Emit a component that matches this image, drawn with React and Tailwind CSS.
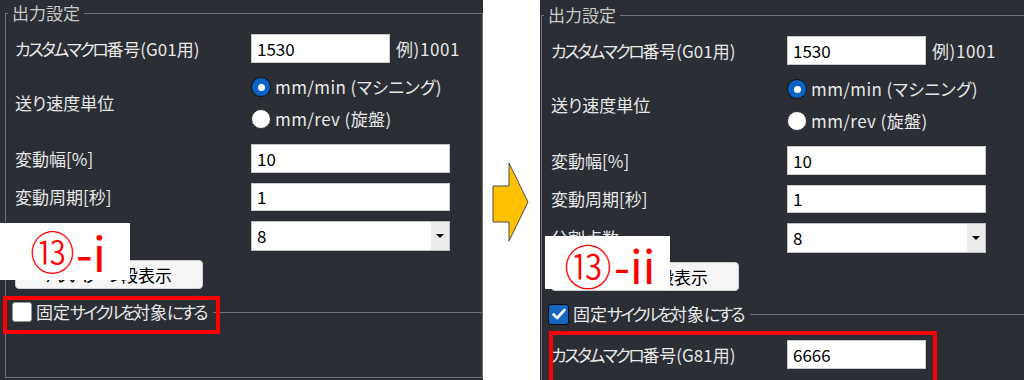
import React from "react";

const font = "font-['Noto_Sans_CJK_JP','Noto_Sans',sans-serif] [font-feature-settings:'palt']";

// kana in the original UI font are narrow, so tighten the kana runs
function J({ t, cls = "tracking-[-2.5px]" }) {
  return t.split(/([\u3041-\u30ff]+)/).map((s, i) =>
    i % 2 ? (
      <span key={i} className={cls}>{s}</span>
    ) : (
      s
    )
  );
}

function TextBox({ value, className = "" }) {
  return (
    <div className={`h-full bg-white border border-[#c9c9c9] flex items-center pl-[5px] text-[17px] text-black ${className}`}>
      {value}
    </div>
  );
}

function Radio({ checked, label }) {
  return (
    <div className="h-[32px] flex items-center gap-[4px]">
      {checked ? (
        <span className="w-[20px] h-[20px] rounded-full bg-[#0b63c4] border border-[#111] flex items-center justify-center">
          <span className="w-[7px] h-[7px] rounded-full bg-white" />
        </span>
      ) : (
        <span className="w-[20px] h-[20px] rounded-full bg-white border border-[#333]" />
      )}
      <span className="text-[17px] text-[#e8e8e8] tracking-[0.4px]">{label}</span>
    </div>
  );
}

function Checkbox({ checked }) {
  if (checked) {
    return (
      <span className="w-[21px] h-[21px] rounded-[3px] bg-[#1565c0] border border-[#0d0d0d] flex items-center justify-center">
        <svg viewBox="0 0 16 16" className="w-[16px] h-[16px]">
          <path d="M2.5 8.5 L6.2 12 L13.5 4" fill="none" stroke="white" strokeWidth="2.6" strokeLinecap="round" strokeLinejoin="round" />
        </svg>
      </span>
    );
  }
  return <span className="w-[20px] h-[20px] rounded-[3px] bg-white border border-[#999]" />;
}

function Panel({ second }) {
  return (
    <div className={`h-[380px] overflow-hidden bg-[#2b2e34] ${second ? "flex-1 pl-[1px] pt-[4px]" : "w-[483px] pl-[5px] pt-[2px]"}`}>
      <fieldset className={`border border-[#6e7177] ${second ? "w-[484px] h-[400px]" : "w-[478px] h-[376px]"}`}>
        <legend className="ml-[2px] px-[4px] h-[22px] leading-[22px] text-[17px] text-[#c9c9c9]">出力設定</legend>
        <div className="pl-[9px] text-[17px] text-[#e8e8e8]">
          <div className="mt-[10px] h-[29px] flex items-center">
            <span className="w-[236px]"><J t="カスタムマクロ番号(G01用)" /></span>
            <TextBox value="1530" className="w-[139px]" />
            <span className="ml-[6px] tracking-[0.6px]">例)1001</span>
          </div>
          <div className="mt-[8px] h-[64px] flex items-center">
            <span className="w-[236px]">送り速度単位</span>
            <div className="flex flex-col">
              <Radio checked label="mm/min (マシニング)" />
              <Radio label="mm/rev (旋盤)" />
            </div>
          </div>
          <div className="mt-[9px] h-[29px] flex items-center">
            <span className="w-[236px]">変動幅[%]</span>
            <TextBox value="10" className="w-[199px]" />
          </div>
          <div className="mt-[10px] h-[28px] flex items-center">
            <span className="w-[236px]">変動周期[秒]</span>
            <TextBox value="1" className="w-[199px]" />
          </div>
          <div className="mt-[10px] h-[30px] flex items-center">
            <span className="w-[236px]">分割点数</span>
            <div className="w-[199px] h-full bg-white border border-[#bdbdbd] flex text-black">
              <span className="flex-1 flex items-center pl-[5px]">8</span>
              <span className="w-[18px] bg-[#ececec] flex items-center justify-center">
                <span className="w-0 h-0 border-l-[4px] border-r-[4px] border-t-[4px] border-l-transparent border-r-transparent border-t-black" />
              </span>
            </div>
          </div>
          <div className="mt-[9px] h-[29px] flex">
            <button className="w-[188px] h-full bg-[#f5f5f5] border border-[#cfcfcf] rounded-[4px] text-[17px] text-black">
              <J t="パスパターン段表示" cls="tracking-[-3px]" />
            </button>
          </div>
          <div className="mt-[12px] h-[22px] -ml-[3px] flex items-center">
            <Checkbox checked={second} />
            <span className="ml-[4px] text-[17px] text-[#e8e8e8]">
              <J t="固定サイクルを対象にする" cls="tracking-[-2.8px]" />
            </span>
            <span className="ml-[7px] flex-1 h-px bg-[#6e7177]" />
          </div>
          {second && (
            <div className="mt-[15px] h-[29px] flex items-center">
              <span className="w-[236px]"><J t="カスタムマクロ番号(G81用)" /></span>
              <TextBox value="6666" className="w-[139px]" />
            </div>
          )}
        </div>
      </fieldset>
    </div>
  );
}

export default function App() {
  return (
    <div className={`relative w-[1024px] h-[380px] bg-white flex overflow-hidden ${font}`}>
      <Panel />
      <div className="w-[57px] h-full bg-white">
        <svg width="57" height="90" viewBox="0 0 57 90" className="mt-[160px]">
          <polygon points="10,26 26,26 26,3 45,42 26,81 26,62 10,62" fill="#FFC000" stroke="#4d4d4d" strokeWidth="1" />
        </svg>
      </div>
      <Panel second />

      {/* annotation overlays */}
      <div className="absolute left-0 top-[223px] w-[130px] h-[57px] bg-white flex items-center pl-[30px] pb-[2px] leading-none text-[#ff0000]">
        <span className="text-[45px] font-light">⑬</span>
        <span className="ml-[1px] text-[48px]">-i</span>
      </div>
      <div className="absolute left-[545px] top-[236px] w-[125px] h-[53px] bg-white flex items-center pl-[19px] pt-[2px] leading-none text-[#ff0000]">
        <span className="text-[48px] font-light">⑬</span>
        <span className="ml-[2px] text-[46px]">-ii</span>
      </div>
      <div className="absolute left-[3px] top-[296px] w-[217px] h-[38px] border-[4px] border-[#ff0000]" />
      <div className="absolute left-[549px] top-[331px] w-[388px] h-[60px] border-[4px] border-[#ff0000]" />
    </div>
  );
}
